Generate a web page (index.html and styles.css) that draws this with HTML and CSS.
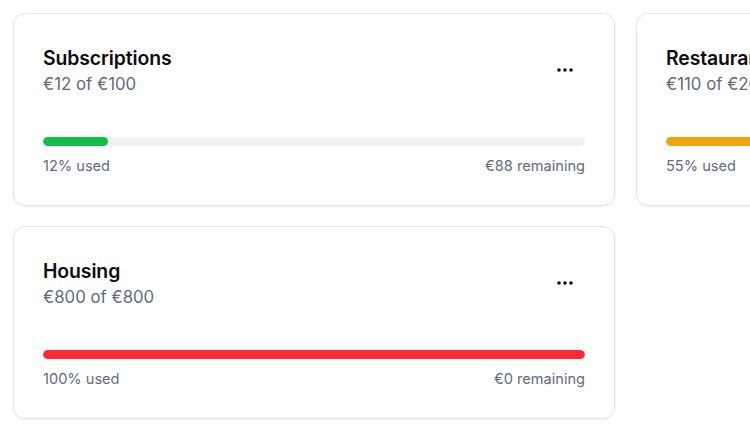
FILE: index.html
```html
<!DOCTYPE html>
<html lang="en">
<head>
<meta charset="utf-8">
<title>Budgets</title>
<link rel="stylesheet" href="styles.css">
</head>
<body>
<main class="grid">
  <section class="card">
    <div class="head">
      <div class="titles">
        <h2 class="title">Subscriptions</h2>
        <p class="sub">€12 of €100</p>
      </div>
      <button class="more" aria-label="More">
        <svg width="16" height="4" viewBox="0 0 16 4"><circle cx="2" cy="2" r="1.8"/><circle cx="8" cy="2" r="1.8"/><circle cx="14" cy="2" r="1.8"/></svg>
      </button>
    </div>
    <div class="track"><div class="fill green" style="width:12%"></div></div>
    <div class="meta"><span>12% used</span><span>€88 remaining</span></div>
  </section>
  <section class="card">
    <div class="head">
      <div class="titles">
        <h2 class="title">Restaurants</h2>
        <p class="sub">€110 of €200</p>
      </div>
      <button class="more" aria-label="More">
        <svg width="16" height="4" viewBox="0 0 16 4"><circle cx="2" cy="2" r="1.8"/><circle cx="8" cy="2" r="1.8"/><circle cx="14" cy="2" r="1.8"/></svg>
      </button>
    </div>
    <div class="track"><div class="fill amber" style="width:55%"></div></div>
    <div class="meta"><span>55% used</span><span>€90 remaining</span></div>
  </section>
  <section class="card">
    <div class="head">
      <div class="titles">
        <h2 class="title">Housing</h2>
        <p class="sub">€800 of €800</p>
      </div>
      <button class="more" aria-label="More">
        <svg width="16" height="4" viewBox="0 0 16 4"><circle cx="2" cy="2" r="1.8"/><circle cx="8" cy="2" r="1.8"/><circle cx="14" cy="2" r="1.8"/></svg>
      </button>
    </div>
    <div class="track"><div class="fill red" style="width:100%"></div></div>
    <div class="meta"><span>100% used</span><span>€0 remaining</span></div>
  </section>
</main>
</body>
</html>
```
FILE: styles.css
```css
* { box-sizing: border-box; }
html, body { margin: 0; background: #fff; overflow: hidden; }
body {
  padding: 13px;
  font-family: Inter, "Noto Sans", "Liberation Sans", sans-serif;
  color: #111;
  width: 750px;
  height: 440px;
}
.grid {
  display: grid;
  grid-template-columns: repeat(2, 602px);
  gap: 20px 21px;
}
.card {
  border: 1px solid #e3e5e9;
  border-radius: 12px;
  background: #fff;
  box-shadow: 0 1px 3px rgba(15, 23, 42, 0.06);
  padding: 30px 29px 29px;
}
.head {
  display: flex;
  align-items: center;
  justify-content: space-between;
}
.title {
  margin: 0;
  font-size: 19.4px;
  line-height: 28px;
  font-weight: 600;
  color: #0d0d0f;
  letter-spacing: -0.1px;
}
.sub {
  margin: 0;
  font-size: 16.8px;
  line-height: 24px;
  color: #5f6b7c;
}
.more {
  width: 40px;
  height: 40px;
  border: 0;
  background: transparent;
  padding: 0;
  display: flex;
  align-items: center;
  justify-content: center;
  fill: #111;
}
.track {
  margin-top: 41px;
  height: 9px;
  border-radius: 5px;
  background: #eff1f4;
  overflow: hidden;
}
.fill { height: 100%; border-radius: 5px; }
.green { background: #14bf48; }
.amber { background: #eda60b; }
.red { background: #ff2a38; }
.meta {
  margin-top: 10px;
  display: flex;
  justify-content: space-between;
  font-size: 14.6px;
  line-height: 20px;
  color: #5f6b7c;
}
```
